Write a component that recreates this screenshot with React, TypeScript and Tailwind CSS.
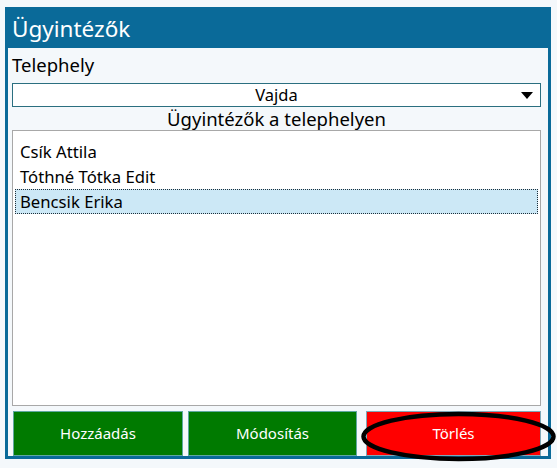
import React from "react";

const items = ["Csík Attila", "Tóthné Tótka Edit", "Bencsik Erika"];

export default function App() {
  const selected = 2;

  return (
    <div
      className="w-[557px] h-[468px] bg-[#f4f8fb] pt-[7px] pl-[5px]"
      style={{ fontFamily: '"Noto Sans", "Open Sans", sans-serif' }}
    >
      <div className="relative w-[546px] h-[452px] border-[3px] border-[#0a6a99] bg-[#f4f8fb] flex flex-col">
        {/* title bar */}
        <div className="h-[38px] bg-[#0a6a99] text-white text-[22.5px] leading-[37px] pl-[4px]">
          Ügyintézők
        </div>

        <div className="flex flex-col flex-1 pl-[4px] pr-[7px]">
          <div className="text-[18.5px] leading-[30px] mt-[2px] text-black">Telephely</div>

          <div className="relative mt-[3px] h-[24px] bg-white border border-[#2b6f80] flex items-center justify-center text-[16.5px] text-black">
            Vajda
            <svg className="absolute right-[7px] top-[8px]" width="12" height="7" viewBox="0 0 12 7">
              <path d="M0 0 L12 0 L6 7 Z" fill="#000" />
            </svg>
          </div>

          <div className="h-[23px] text-center text-[18.5px] leading-[23px] text-black">
            Ügyintézők a telephelyen
          </div>

          <div className="h-[276px] bg-white border border-[#a8a8a8] pt-[8px] px-[2px]">
            {items.map((name, i) => (
              <div
                key={name}
                className={
                  i === selected
                    ? "h-[25px] leading-[23px] pl-[4px] text-[16.7px] text-black bg-[#cce8f6] border border-dotted border-[#1f2f3a]"
                    : "h-[25px] leading-[25px] pl-[5px] text-[16.7px] text-black"
                }
              >
                {name}
              </div>
            ))}
          </div>

          <div className="flex mt-[5px] h-[45px] pl-[1px] text-white text-[15px]">
            <button className="w-[170px] h-full bg-[#007a00] border border-[#5fa8a0]">Hozzáadás</button>
            <button className="ml-[5px] w-[169px] h-full bg-[#007a00] border border-[#5fa8a0]">Módosítás</button>
            <button className="ml-[9px] w-[175px] h-full bg-[#ff0000] border border-[#7fa8b8]">Törlés</button>
          </div>
        </div>

        {/* annotation ellipse */}
        <svg
          className="absolute left-[350px] top-[400px] pointer-events-none"
          width="202"
          height="54"
          viewBox="0 0 202 54"
        >
          <ellipse cx="100.5" cy="26.5" rx="95" ry="22.5" fill="none" stroke="#000" strokeWidth="4.5" />
        </svg>
      </div>
    </div>
  );
}
